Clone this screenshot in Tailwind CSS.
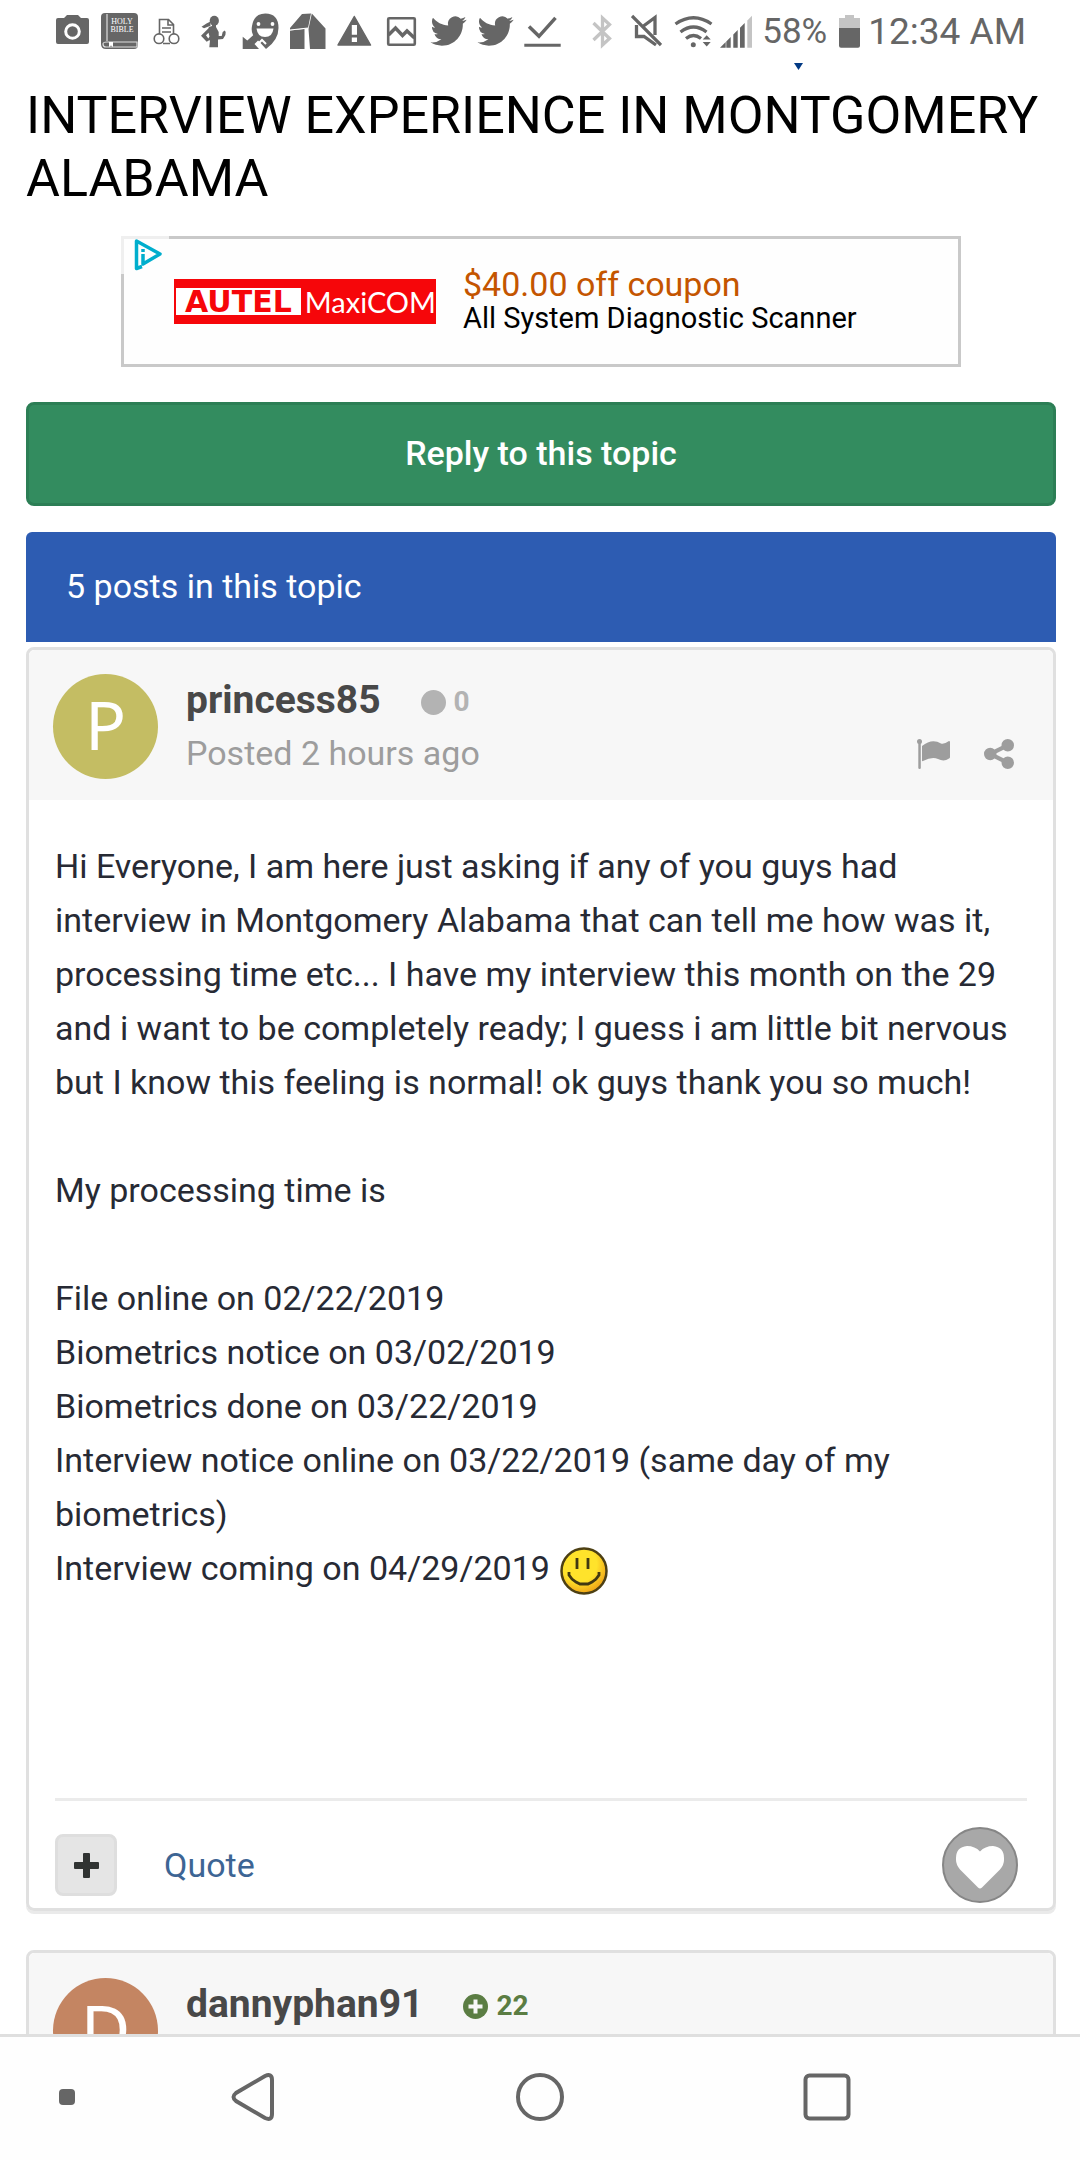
<!DOCTYPE html>
<html lang="en">
<head>
    <meta charset="UTF-8">
    <meta name="viewport" content="width=device-width, initial-scale=1.0">
    <title>Interview Experience in Montgomery Alabama</title>
    <script src="https://cdn.jsdelivr.net/npm/@tailwindcss/browser@4"></script>
</head>
<body class="h-screen flex flex-col overflow-hidden bg-white font-[Roboto,sans-serif] text-[34px] text-[#272a34]">

    <!-- Status bar -->
    <header class="relative flex items-center shrink-0 h-16 pl-[49px] pr-[54px] text-[#666]">
        <svg class="w-[47px] h-12" viewBox="0 0 47 48" fill="currentColor"><path d="M9 10h6l3-3h11l3 3h6q2 0 2 2v22q0 2-2 2H9q-2 0-2-2V12q0-2 2-2z"/><circle cx="23.500" cy="23.500" r="6.800" fill="none" stroke="#fff" stroke-width="3"/></svg>
        <svg class="w-[47px] h-12" viewBox="0 0 47 48" fill="currentColor"><path d="M9 5h29q4 0 4 4v28q0 4-4 4H10q-5 0-5-5V9q0-4 4-4z"/><path d="M11 6v27M7 36q0-2 4-2h30v5H10q-3 0-3-3z" fill="none" stroke="#ddd" stroke-width="1.200"/><path d="M13 34h4v5l-2-1.500-2 1.500z" fill="#fff"/><text x="26" y="16" text-anchor="middle" font-family="Liberation Serif, serif" font-size="8" fill="#fff">HOLY</text><text x="26" y="24" text-anchor="middle" font-family="Liberation Serif, serif" font-size="8" fill="#fff">BIBLE</text></svg>
        <svg class="w-[47px] h-12" viewBox="0 0 47 48" fill="none" stroke="currentColor" stroke-width="1.600"><path d="M16.500 26V11.500h9l5 5V26M25 11.500v5.500h5.500M19 20h9M19 24h9M20 35.500h7"/><circle cx="16" cy="30.700" r="4.800"/><circle cx="31" cy="30.700" r="4.800"/></svg>
        <svg class="w-[47px] h-12" viewBox="0 0 47 48" fill="currentColor"><ellipse cx="24.300" cy="12.800" rx="4.600" ry="5"/><path d="M20.500 13.500l-4 2-5 3.200 2.500 1.600 6.500-2.500zM19 19l3-1v-3h4v4l2.700 5v4h3l1-4 2-1.500 1 1.500-.3 3-2.400 4-5 .5v7.800h-8.700l.7-7-1.300.3-2 1.200-5.700-6 7.300-7.300zM18.500 24.700L16 27.300l2.300 3.300 1.200-2z" fill-rule="evenodd"/></svg>
        <svg class="w-[47px] h-12" viewBox="0 0 47 48" fill="currentColor"><path d="M28.300 5.500q13.200 0 13.200 14.500 0 12-12.500 21L16 27q-2-4-1-9 2-12.500 13.300-12.500z"/><circle cx="21.500" cy="16" r="1.900" fill="#fff"/><circle cx="35.500" cy="16" r="1.900" fill="#fff"/><path d="M19.500 20.500h17q-1 8.500-8.500 8.500t-8.500-8.500z" fill="#fff"/><path d="M14 25.500L28.500 41.500H14z" fill="#fff"/><path d="M5.700 28.700l4.600 3.800L17 26.500l5 5-4.500 4.500 4.500 5H5.700z"/><path d="M21 36l4-4 4 4" fill="none" stroke="#fff" stroke-width="2"/></svg>
        <svg class="w-[47px] h-12" viewBox="0 0 47 48" fill="currentColor"><path d="M6 20L18 6l9-.5L24 20 6 22zM6 22.500l14.500-1.500v20H6zM27.800 5.500l13.700 15V41H26l-1.500-20z"/><path d="M6 22l18-2" stroke="#fff"/></svg>
        <svg class="w-[47px] h-12" viewBox="0 0 47 48" fill="currentColor"><path d="M23.300 8.500L39.500 37H7z" stroke="currentColor" stroke-width="1.500" stroke-linejoin="round"/><path d="M20.800 17H26v9.700h-5.200zM20.800 29.500H26V34h-5.200z" fill="#fff"/></svg>
        <svg class="w-[47px] h-12" viewBox="0 0 47 48" fill="none" stroke="currentColor"><rect x="10.200" y="10.200" width="26.600" height="26.600" rx="1" stroke-width="2.600"/><path d="M10.500 27l7-7 7 7.500 4.500-4.500 7.500 7" stroke-width="3.500"/></svg>
        <svg class="w-[47px] h-12" viewBox="0 0 47 48" fill="currentColor"><path transform="translate(5.500 5) scale(1.500)" d="M23.953 4.570a10 10 0 01-2.825.775 4.958 4.958 0 002.163-2.723c-.951.555-2.005.959-3.127 1.184a4.920 4.920 0 00-8.384 4.482C7.690 8.095 4.067 6.130 1.640 3.162a4.822 4.822 0 00-.666 2.475c0 1.710.87 3.213 2.188 4.096a4.904 4.904 0 01-2.228-.616v.06a4.923 4.923 0 003.946 4.827 4.996 4.996 0 01-2.212.085 4.936 4.936 0 004.604 3.417 9.867 9.867 0 01-6.102 2.105c-.39 0-.779-.023-1.170-.067a13.995 13.995 0 007.557 2.209c9.053 0 13.998-7.496 13.998-13.985 0-.21 0-.42-.015-.63A9.935 9.935 0 0024 4.590z"/></svg>
        <svg class="w-[47px] h-12" viewBox="0 0 47 48" fill="currentColor"><path transform="translate(5.500 5) scale(1.500)" d="M23.953 4.570a10 10 0 01-2.825.775 4.958 4.958 0 002.163-2.723c-.951.555-2.005.959-3.127 1.184a4.920 4.920 0 00-8.384 4.482C7.690 8.095 4.067 6.130 1.640 3.162a4.822 4.822 0 00-.666 2.475c0 1.710.87 3.213 2.188 4.096a4.904 4.904 0 01-2.228-.616v.06a4.923 4.923 0 003.946 4.827 4.996 4.996 0 01-2.212.085 4.936 4.936 0 004.604 3.417 9.867 9.867 0 01-6.102 2.105c-.39 0-.779-.023-1.170-.067a13.995 13.995 0 007.557 2.209c9.053 0 13.998-7.496 13.998-13.985 0-.21 0-.42-.015-.63A9.935 9.935 0 0024 4.590z"/></svg>
        <svg class="w-[47px] h-12" viewBox="0 0 47 48" fill="none" stroke="currentColor"><path d="M10 18.500l10 9.800 16.500-18.500" stroke-width="3.500"/><path d="M5.300 37.200h36.400" stroke-width="3"/></svg>

        <div class="flex items-center ml-auto">
            <svg class="w-5 h-12" viewBox="0 0 20 48" fill="none" stroke="#c4c4c4" stroke-width="3.300"><path d="M1.500 15l16 15.500-7 6.500V10l7 6.500L1.500 32"/></svg>
            <svg class="w-[31px] h-12 ml-[19px]" viewBox="0 0 31 48" fill="none" stroke="currentColor" stroke-width="3.300"><path d="M1 8l29 29M5.500 17v11.500h7.500L25 37M12.500 18L24 9.500V27"/></svg>
            <svg class="w-10 h-12 ml-3" viewBox="0 0 40 48" fill="none" stroke="currentColor" stroke-width="3.300"><path d="M1.500 16q18-12.500 36 0M6.500 24q13-10 26 0M12 30.500q7.500-6 15 0"/><circle cx="19.300" cy="36.800" r="2.500" fill="currentColor" stroke="none"/><path d="M28.700 31.500h8l-4-4.200zM28.700 34h8l-4 4.500z" fill="currentColor" stroke="none"/></svg>
            <svg class="w-8 h-12 ml-1.5" viewBox="0 0 32 48" fill="currentColor"><path d="M0 39.700L5.700 34v5.700zM6.300 33.500l4.400-4.400v10.600H6.300zM13.300 26.500l4.400-4.400v17.600h-4.400zM20 19.800l4.700-4.700v24.600H20z"/><path d="M27.300 12.500L32 7.800v31.900h-4.700z" fill="#c4c4c4"/></svg>
            <span class="ml-2.5 text-[35px]">58%</span>
            <svg class="w-[21px] h-12 ml-3" viewBox="0 0 21 48" fill="currentColor"><path d="M6 7h9v3h6v11H0V10h6z" fill="#c4c4c4"/><path d="M0 20h21v17.700q0 2-2 2H2q-2 0-2-2z"/></svg>
            <span class="ml-2 text-[37px]">12:34 AM</span>
        </div>
        <svg class="absolute left-[794px] top-[63px] w-[9px] h-[7px]" viewBox="0 0 9 7" fill="#023a84"><path d="M0 0h9L4.500 7z"/></svg>
    </header>

    <main class="flex-1 min-h-0 overflow-hidden pl-[26px] pr-6 pt-5">
        <h1 class="text-[52px] leading-[63px] text-black">INTERVIEW EXPERIENCE IN MONTGOMERY ALABAMA</h1>

        <!-- Ad banner -->
        <a href="#" class="relative flex items-center max-w-[840px] h-[131px] mx-auto mt-[26px] pl-[50px] border-3 border-[#c9c9c9] bg-[#fefefe]">
            <svg class="absolute -left-[3px] -top-[3px] w-12 h-[38px]" viewBox="0 0 48 38"><path d="M0 0h48v38H0z" fill="#fefefe"/><path d="M1.500 38V1.500H48" fill="none" stroke="#efefef" stroke-width="3"/><path d="M21 30.500l-5.500 2V5L39 18 22 28V18M22 13v3" fill="none" stroke="#00aecd" stroke-width="3.500" stroke-linejoin="round"/></svg>
            <span class="flex items-center w-[262px] h-[45px] pl-0.5 bg-[#f6060a] whitespace-nowrap">
                <span class="flex items-center justify-center w-32 h-[27px] bg-white font-[DejaVu_Sans,sans-serif] font-bold text-[30px] leading-[27px] text-[#f6060a]">AUTEL</span>
                <span class="pl-1 font-[Lato,sans-serif] text-[29px] leading-[27px] text-white">MaxiCOM</span>
            </span>
            <span class="pl-[27px] pb-1">
                <span class="block text-[34px] leading-9 text-[#c45500]">$40.00 off coupon</span>
                <span class="block text-[29px] leading-8 text-black">All System Diagnostic Scanner</span>
            </span>
        </a>

        <button type="button" class="block w-full h-[104px] mt-[35px] pb-0.5 rounded-lg border-3 border-[#2c7e55] bg-[#338c5f] font-medium text-white">Reply to this topic</button>

        <h2 class="mt-[26px] pl-10 pb-0.5 rounded-t-md bg-[#2d5cb2] leading-[108px] text-white">5 posts in this topic</h2>

        <article class="mt-[5px] rounded-lg border-3 border-[#e0e0e0] shadow-[0_3px_0_#eaeaea]">
            <div class="flex items-center px-6 pt-[23px] pb-[21px] rounded-t-md bg-[#f7f7f7]">
                <a href="#" class="flex items-center justify-center shrink-0 size-[105px] pb-1 rounded-full bg-[#c4bd63] font-[Noto_Sans,sans-serif] text-[68px] leading-none text-white">P</a>
                <div class="ml-7">
                    <div class="flex items-center leading-[50px]">
                        <a href="#" class="font-bold text-[39px] text-[#484848]">princess85</a>
                        <span class="size-[25px] mt-1 ml-10 rounded-full bg-[#b3b3b3]"></span>
                        <span class="mt-1 ml-2 font-bold text-[28px] text-[#b3b3b3]">0</span>
                    </div>
                    <a href="#" class="block leading-[52px] text-[#9d9d9d]">Posted 2 hours ago</a>
                </div>
                <div class="flex gap-[34px] self-end ml-auto pr-[15px] pb-2.5 text-[#9d9d9d]">
                    <button type="button" aria-label="Report post"><svg class="w-[33px] h-[30px]" viewBox="0 0 33 30" fill="currentColor"><circle cx="2.500" cy="2.500" r="2.500"/><path d="M1.300 3h2.500v26q0 1-1.200 1t-1.300-1zM5 7q10-8 19-2.500 3 1 8-2.500 1 0 1 1v15q0 1-1 1.500-5 3.500-11 .5-6-2.500-15 2-1 .5-1-.5z"/></svg></button>
                    <button type="button" aria-label="Share post"><svg class="size-[30px]" viewBox="0 128 1536 1536" fill="currentColor"><path d="M1216 1024q133 0 226.500 93.500t93.500 226.500-93.500 226.500-226.500 93.500-226.500-93.500-93.500-226.500q0-12 2-34l-360-180q-92 86-218 86-133 0-226.500-93.500t-93.500-226.500 93.500-226.500 226.500-93.500q126 0 218 86l360-180q-2-22-2-34 0-133 93.500-226.500t226.500-93.500 226.500 93.500 93.500 226.500-93.500 226.500-226.500 93.500q-126 0-218-86l-360 180q2 22 2 34t-2 34l360 180q92-86 218-86z"/></svg></button>
                </div>
            </div>

            <div class="px-[26px] pt-[39px]">
                <div class="pb-[203px] leading-[54px]">
                    <p>Hi Everyone, I am here just asking if any of you guys had interview in Montgomery Alabama that can tell me how was it, processing time etc... I have my interview this month on the 29 and i want to be completely ready; I guess i am little bit nervous but I know this feeling is normal! ok guys thank you so much!</p>
                    <p class="mt-[54px]">My processing time is</p>
                    <p class="mt-[54px]">File online on 02/22/2019<br>
                    Biometrics notice on 03/02/2019<br>
                    Biometrics done on 03/22/2019<br>
                    Interview notice online on 03/22/2019 (same day of my biometrics)<br>
                    Interview coming on 04/29/2019
                    <svg class="inline-block size-12 ml-0.5 align-middle" viewBox="0 0 48 48" role="img" aria-label=":)">
                        <defs><radialGradient id="face" cx=".4" cy=".35" r=".7"><stop offset=".55" stop-color="#ffe32b"/><stop offset="1" stop-color="#ee9c14"/></radialGradient></defs>
                        <circle cx="24" cy="24" r="22.500" fill="url(#face)" stroke="#4d4014" stroke-width="2.500"/>
                        <path d="M17 11v11M28 11v11M9 25v3l3 4 4 3 4 2h8l4-2 4-3 3-4v-3" fill="none" stroke="#413811" stroke-width="2.800"/>
                    </svg></p>
                </div>
                <div class="flex items-center pt-[26px] pb-[5px] border-t-3 border-[#ebebeb]">
                    <button type="button" aria-label="Multiquote" class="flex items-center justify-center size-[62px] rounded-lg border-3 border-[#dedede] bg-[#e5e5e5]"><svg class="size-[25px]" viewBox="0 0 25 25" fill="#303332"><path d="M10 0h5q1 0 1 1v8h8q1 0 1 1v5q0 1-1 1h-8v8q0 1-1 1h-5q-1 0-1-1v-8H1q-1 0-1-1v-5q0-1 1-1h8V1q0-1 1-1z"/></svg></button>
                    <a href="#" class="ml-[47px] text-[#3d6594]">Quote</a>
                    <button type="button" aria-label="Like" class="ml-auto mr-[9px]"><svg class="block size-[76px]" viewBox="0 0 76 76"><circle cx="38" cy="38" r="37" fill="#a8a8a8" stroke="#868686" stroke-width="2"/><path d="M38 61.500q-1 0-2-1L18 42.500q-4-5-4-9.500v-2q0-11 11-12 8 0 13 5.500Q43 19 51 19q11 1 11 12v2q0 5-4 9.500l-18 18q-1 1-2 1z" fill="#fff"/></svg></button>
                </div>
            </div>
        </article>

        <article class="mt-[39px] rounded-lg border-3 border-[#e0e0e0]">
            <div class="flex items-center px-6 pt-6 pb-[21px] rounded-t-md bg-[#f7f7f7]">
                <a href="#" class="flex items-center justify-center shrink-0 size-[105px] pb-1 rounded-full bg-[#c48562] font-[Noto_Sans,sans-serif] text-[68px] leading-none text-white">D</a>
                <div class="ml-7">
                    <div class="flex items-center leading-[50px]">
                        <a href="#" class="font-bold text-[39px] text-[#484848]">dannyphan91</a>
                        <svg class="size-[25px] mt-1 ml-10" viewBox="0 0 25 25"><circle cx="12.500" cy="12.500" r="12.500" fill="#5b7d43"/><path d="M12.500 5.500v14M5.500 12.500h14" stroke="#f7f7f7" stroke-width="4"/></svg>
                        <span class="mt-1 ml-2 font-bold text-[28px] text-[#5b7d43]">22</span>
                    </div>
                    <a href="#" class="block leading-[52px] text-[#9d9d9d]">Posted 2 hours ago</a>
                </div>
            </div>
        </article>
    </main>

    <!-- System navigation -->
    <nav class="relative grid grid-cols-[110px_1fr_1fr_1fr_110px] shrink-0 items-center justify-items-center h-[126px] pb-1 border-t-3 border-[#dfdfdf] bg-[#fefefe] text-[#666]">
        <span class="size-4 ml-6 rounded-sm bg-[#666]"></span>
        <button type="button" aria-label="Back"><svg class="block w-11 h-12" viewBox="0 0 44 48" fill="none" stroke="currentColor" stroke-width="4"><path d="M34 3Q41 0 41 7v34q0 7-7 4L5 28q-5-4 0-8z"/></svg></button>
        <button type="button" aria-label="Home"><svg class="block size-12" viewBox="0 0 48 48" fill="none" stroke="currentColor" stroke-width="4"><circle cx="24" cy="24" r="22"/></svg></button>
        <button type="button" aria-label="Recent apps"><svg class="block size-12" viewBox="0 0 48 48" fill="none" stroke="currentColor" stroke-width="4"><rect x="2.500" y="2.500" width="43" height="43" rx="4"/></svg></button>
    </nav>
</body>
</html>
